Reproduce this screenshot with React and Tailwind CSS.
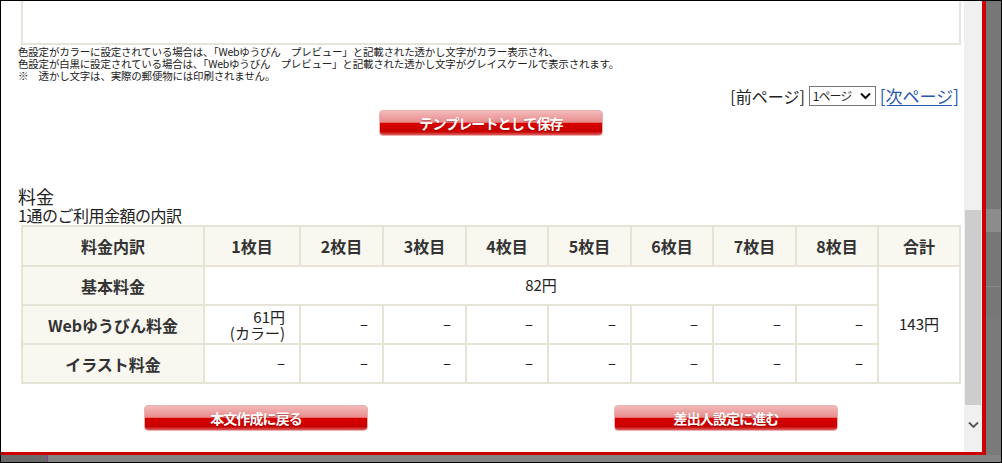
import React from 'react';

const font = { fontFamily: '"Noto Sans CJK JP", "Noto Sans", sans-serif' };

const sheets = ['1枚目', '2枚目', '3枚目', '4枚目', '5枚目', '6枚目', '7枚目', '8枚目'];
const colWidths = [182, 96, 83, 83, 82, 83, 82, 83, 82, 82];

const notes = [
  '色設定がカラーに設定されている場合は、「Webゆうびん　プレビュー」と記載された透かし文字がカラー表示され、',
  '色設定が白黒に設定されている場合は、「Webゆうびん　プレビュー」と記載された透かし文字がグレイスケールで表示されます。',
  '※　透かし文字は、実際の郵便物には印刷されません。',
];

function RedButton({ children }) {
  return (
    <button className="w-[224px] h-[26px] rounded-[4px] border border-[#eab0b0] bg-[linear-gradient(#f3baba,#e88c8c_47%,#d80000_51%,#c80000_86%,#de6060)] text-white text-[14px] tracking-[-0.9px] font-bold leading-none [text-shadow:0_1px_1px_rgba(120,0,0,0.45)]">
      {children}
    </button>
  );
}

const th = 'border-2 border-[#e6e4d6] bg-[#f8f7f0] text-[#333] text-[16px] font-bold text-center';
const td = 'border-2 border-[#e6e4d6] bg-white text-[#222] text-[15px] text-right pr-[14px]';

export default function App() {
  return (
    <div className="w-[1002px] h-[463px] border border-black bg-[#7d7d7d] overflow-hidden flex flex-col" style={font}>
      <div className="flex h-[454px]">
        {/* dialog */}
        <div className="w-[985px] flex border-r-4 border-b-[3px] border-[#cc0000] bg-white">
          <div className="w-[963px] flex flex-col">
            {/* preview frame, top cut off */}
            <div className="ml-[20px] w-[940px] h-[44px] border-x-2 border-b-2 border-[#e6e5d9] shrink-0" />

            <div className="pl-[17px] pt-[1px] text-[10.5px] leading-[12px] tracking-[-0.2px] text-[#222]">
              {notes.map((n) => (
                <p key={n}>{n}</p>
              ))}
            </div>

            {/* pager */}
            <div className="mt-[4px] pr-[5px] flex justify-end items-center gap-[4px] h-[20px] text-[16px] text-[#222]">
              <span>[前ページ]</span>
              <div className="h-[20px] w-[67px] border border-[#767676] bg-white flex items-center justify-between pl-[3px] pr-[4px]">
                <span className="text-[12px] tracking-[-1px]">1ページ</span>
                <svg width="11" height="8" viewBox="0 0 11 8">
                  <path d="M1 1.5 L5.5 6 L10 1.5" fill="none" stroke="#111" strokeWidth="2" />
                </svg>
              </div>
              <a href="#" className="text-[#2757b0] underline underline-offset-2 text-[17px]">[次ページ]</a>
            </div>

            <div className="mt-[4px] ml-[20px] w-[940px] flex justify-center">
              <RedButton>テンプレートとして保存</RedButton>
            </div>

            {/* fees */}
            <div className="mt-[50px] pl-[17px] text-[#222]">
              <h2 className="text-[18px] leading-[20px]">料金</h2>
              <p className="text-[16px] leading-[19px] tracking-[-0.5px]">1通のご利用金額の内訳</p>
            </div>

            <table className="ml-[20px] w-[940px] table-fixed border-collapse">
              <colgroup>
                {colWidths.map((w, i) => (
                  <col key={i} style={{ width: w }} />
                ))}
              </colgroup>
              <thead>
                <tr className="h-[40px]">
                  <th className={th}>料金内訳</th>
                  {sheets.map((s) => (
                    <th key={s} className={th}>{s}</th>
                  ))}
                  <th className={th}>合計</th>
                </tr>
              </thead>
              <tbody>
                <tr className="h-[39px]">
                  <th className={th}>基本料金</th>
                  <td colSpan={8} className={`${td} !text-center !pr-0`}>82円</td>
                  <td rowSpan={3} className={`${td} !text-center !pr-0`}>143円</td>
                </tr>
                <tr className="h-[39px]">
                  <th className={th}>Webゆうびん料金</th>
                  <td className={`${td} leading-[16px]`}>
                    61円
                    <br />
                    (カラー)
                  </td>
                  {sheets.slice(1).map((s) => (
                    <td key={s} className={td}>–</td>
                  ))}
                </tr>
                <tr className="h-[39px]">
                  <th className={th}>イラスト料金</th>
                  {sheets.map((s) => (
                    <td key={s} className={td}>–</td>
                  ))}
                </tr>
              </tbody>
            </table>

            <div className="mt-[21px] ml-[20px] w-[940px] grid grid-cols-2">
              <div className="flex justify-center">
                <RedButton>本文作成に戻る</RedButton>
              </div>
              <div className="flex justify-center">
                <RedButton>差出人設定に進む</RedButton>
              </div>
            </div>
          </div>

          {/* scrollbar */}
          <div className="w-[18px] bg-[#f0f0f0] flex flex-col">
            <div className="h-[209px]" />
            <div className="h-[195px] mx-[1px] bg-[#cdcdcd]" />
            <div className="flex-1 flex justify-center pt-[16px]">
              <svg width="11" height="8" viewBox="0 0 11 8">
                <path d="M1 1.5 L5.5 6 L10 1.5" fill="none" stroke="#555" strokeWidth="1.8" />
              </svg>
            </div>
          </div>
        </div>

        {/* page behind the dialog */}
        <div className="flex-1 flex flex-col bg-[#777]">
          <div className="h-[209px] border-b border-[#8a8a8a]" />
          <div className="h-[22px] bg-[#8c8c8c]" />
          <div className="h-[55px] border-b border-[#8a8a8a]" />
          <div className="h-[30px]" />
          <div className="flex-1 bg-[#7a7a7a]" />
        </div>
      </div>
      <div className="flex-1 flex">
        <div className="w-[47px] bg-[#6a6a6a] border-r border-[#8a3a9a]" />
        <div className="flex-1 bg-[#838383]" />
      </div>
    </div>
  );
}
